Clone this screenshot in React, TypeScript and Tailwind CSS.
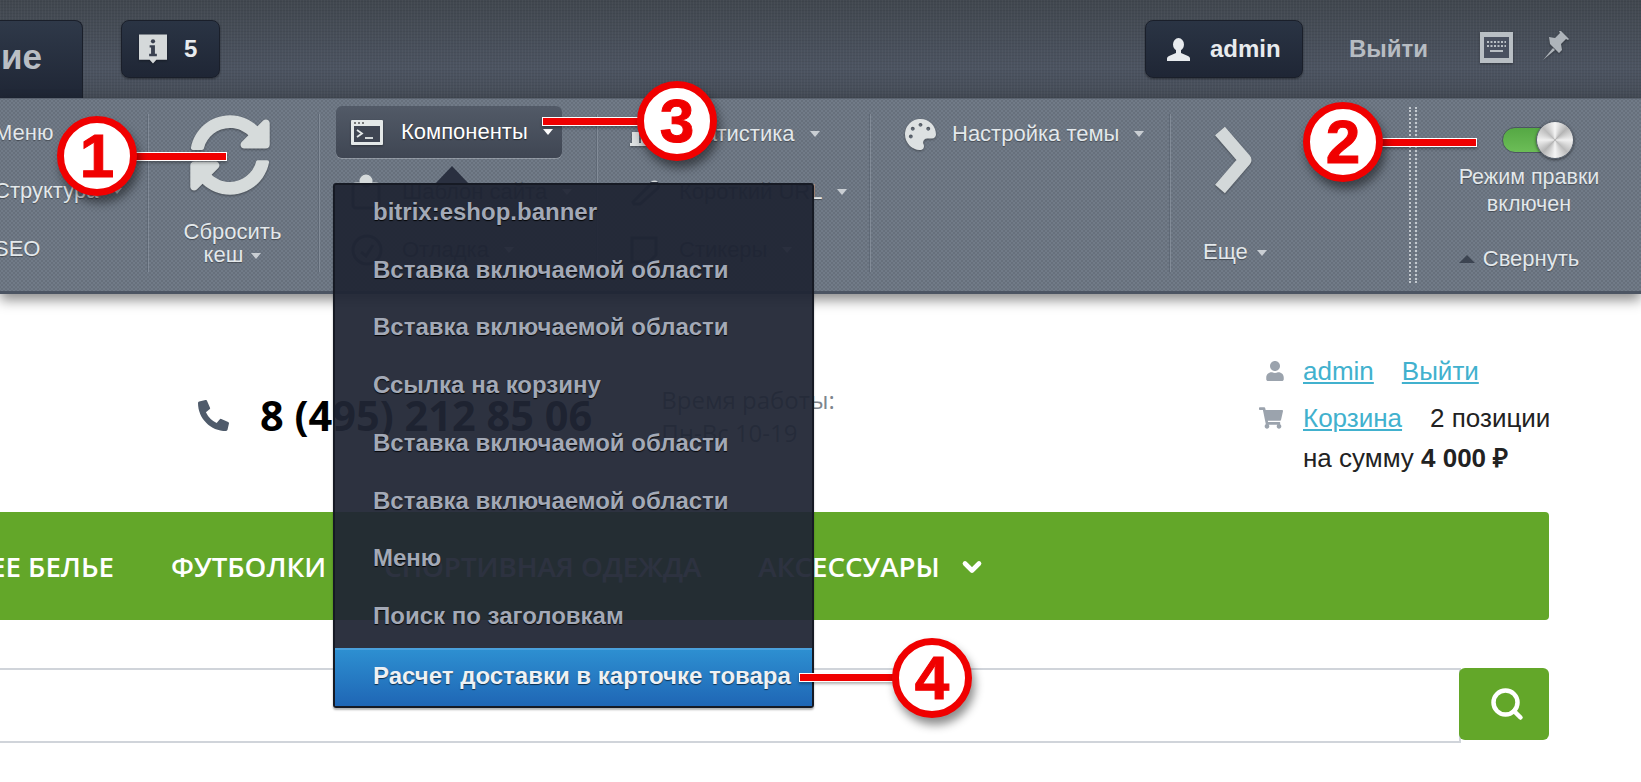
import React from 'react';
import { ChevronDown, Search } from 'lucide-react';
import { FaPalette, FaPhoneAlt, FaShoppingCart, FaSyncAlt, FaUser } from 'react-icons/fa';

const iconShadow = 'drop-shadow-[0_1px_1px_rgba(0,0,0,0.35)]';
const panelText = 'text-[#e3e8eb] text-[22px] leading-none [text-shadow:0_1px_1px_rgba(0,0,0,0.35)]';
// items lying under the dropdown read darker than the panel
const hiddenText = 'text-[#2f3542] text-[22px] leading-none';

const menuItems = [
  'bitrix:eshop.banner',
  'Вставка включаемой области',
  'Вставка включаемой области',
  'Ссылка на корзину',
  'Вставка включаемой области',
  'Вставка включаемой области',
  'Меню',
  'Поиск по заголовкам',
];

function Caret({ className = '' }: { className?: string }) {
  return <span className={`inline-block w-0 h-0 border-x-[5px] border-x-transparent border-t-[6px] border-t-[#c9ced3] ${className}`} />;
}

function Sep() {
  return <div className="w-[2px] h-[158px] mt-[15px] shrink-0 bg-[#5f6976] border-r border-[#828b97]" />;
}

function ToolRow({ icon, label, gap = 'w-[66px]', dim = false }: { icon?: React.ReactNode; label: React.ReactNode; gap?: string; dim?: boolean }) {
  return (
    <div className="h-[58px] flex items-center">
      <div className={`${gap} shrink-0 flex items-center`}>{icon}</div>
      <span className={dim ? hiddenText : panelText}>{label}</span>
      <Caret className={dim ? 'ml-[15px] border-t-[#2f3542]' : 'ml-[15px]'} />
    </div>
  );
}

function Callout({ n, x, y, lineFrom, lineTo, lineY }: { n: number; x: number; y: number; lineFrom: number; lineTo: number; lineY: number }) {
  return (
    <>
      <div
        className="absolute h-[9px] bg-[#f00000] border border-white z-30 shadow-[0_2px_3px_rgba(0,0,0,0.3)]"
        style={{ left: lineFrom, top: lineY, width: lineTo - lineFrom }}
      />
      <div
        className="absolute w-[80px] h-[80px] rounded-full bg-white border-[7px] border-[#f00000] z-30 flex items-center justify-center shadow-[3px_7px_10px_rgba(0,0,0,0.45)] text-[#f00000] font-bold text-[62px] leading-none [-webkit-text-stroke:1px_#f00000]"
        style={{ left: x, top: y }}
      >
        {n}
      </div>
    </>
  );
}

function ConsoleIcon() {
  return (
    <svg width="32" height="25" viewBox="0 0 32 25" className={iconShadow}>
      <rect width="32" height="25" rx="1" fill="#e4e8e8" />
      <rect x="3" y="6" width="26" height="16" fill="#3f4552" />
      <circle cx="4" cy="3" r="1" fill="#555" /><circle cx="8" cy="3" r="1" fill="#555" /><circle cx="12" cy="3" r="1" fill="#555" />
      <path d="M6 10l5 3.500-5 3.500" fill="none" stroke="#e4e8e8" strokeWidth="1.800" />
      <path d="M14 18h8" stroke="#e4e8e8" strokeWidth="1.800" />
    </svg>
  );
}

function InfoIcon() {
  return (
    <svg width="28" height="31" viewBox="0 0 29 31" className={iconShadow}>
      <path d="M0 0h29v26H18l-3.500 4-3.500-4H0z" fill="#d5d9da" />
      <circle cx="14.500" cy="7" r="2.200" fill="#3a4150" />
      <path d="M11 11h5.500v9H18.500v2.500h-8V20h2v-6.500H11z" fill="#3a4150" />
    </svg>
  );
}

function BustIcon() {
  return (
    <svg width="23" height="23" viewBox="0 0 23 23" fill="#e8ebee">
      <ellipse cx="11.500" cy="6.500" rx="5.500" ry="6.500" />
      <path d="M9 12h5v3l7 3c1 .5 2 1.500 2 2.500V23H0v-2.500c0-1 1-2 2-2.500l7-3z" />
    </svg>
  );
}

function KeyboardIcon() {
  return (
    <svg width="33" height="31" viewBox="0 0 33 31" className={iconShadow}>
      <rect width="33" height="31" fill="#b9bfc4" />
      <rect x="4" y="5" width="25" height="21" fill="#4a5160" />
      <path d="M7 10h19M7 14h19" stroke="#b9bfc4" strokeWidth="2" strokeDasharray="2 1.500" />
      <path d="M10 19h13" stroke="#b9bfc4" strokeWidth="2" />
    </svg>
  );
}

function PinIcon() {
  return (
    <svg width="30" height="30" viewBox="0 0 30 30" fill="#aeb4ba" className={iconShadow}>
      <path d="M1 29l10-12 2 2z" />
      <path d="M8 13l9 9 3-3-1-6 5-5 2 1 1-1-9-9-1 1 1 2-5 5-6-1z" />
    </svg>
  );
}

// light above the dropdown's top edge, dark beneath it
function ClipboardIcon() {
  return (
    <svg width="30" height="36" viewBox="0 0 30 36" fill="none" stroke="url(#clip-tone)" strokeWidth="3">
      <defs>
        <linearGradient id="clip-tone" gradientUnits="userSpaceOnUse" x1="0" y1="0" x2="0" y2="36">
          <stop offset="0.3" stopColor="#d5dadb" />
          <stop offset="0.3" stopColor="#2f3542" />
        </linearGradient>
      </defs>
      <rect x="2" y="10" width="26" height="24" rx="3" />
      <circle cx="15" cy="7" r="5" fill="url(#clip-tone)" />
    </svg>
  );
}

function GaugeIcon() {
  return (
    <svg width="32" height="32" viewBox="0 0 32 32" fill="none" stroke="#2f3542" strokeWidth="3">
      <circle cx="16" cy="16" r="14" />
      <path d="M10 18l5 4 7-11" />
    </svg>
  );
}

function ChartIcon() {
  return (
    <svg width="30" height="24" viewBox="0 0 30 24" fill="#dde1e2" className={iconShadow}>
      <rect x="2" y="10" width="7" height="11" /><rect x="11" y="4" width="7" height="17" /><rect x="20" y="0" width="7" height="21" />
      <rect x="0" y="21" width="30" height="3" />
    </svg>
  );
}

function ClipIcon() {
  return (
    <svg width="30" height="28" viewBox="0 0 30 28" fill="none" stroke="url(#url-tone)" strokeWidth="3">
      <defs>
        <linearGradient id="url-tone" gradientUnits="userSpaceOnUse" x1="0" y1="0" x2="0" y2="28">
          <stop offset="0.16" stopColor="#d5dadb" />
          <stop offset="0.16" stopColor="#2f3542" />
        </linearGradient>
      </defs>
      <path d="M3 24L22 5a4 4 0 016 5L10 26l-6 0z" />
    </svg>
  );
}

function StickerIcon() {
  return (
    <svg width="28" height="28" viewBox="0 0 28 28" fill="none" stroke="#2f3542" strokeWidth="3">
      <path d="M2 2h24v17l-7 7H2z" />
    </svg>
  );
}

function TopBar() {
  return (
    <div className="h-[98px] flex bg-[#4a515d] bg-[repeating-linear-gradient(90deg,rgba(255,255,255,0.03)_0_1px,transparent_1px_3px),repeating-linear-gradient(0deg,rgba(0,0,0,0.06)_0_1px,transparent_1px_3px),linear-gradient(#41474f,#4c5461_70%,#454c57)]">
      <div className="w-[83px] h-[78px] mt-[20px] shrink-0 overflow-hidden rounded-tr-lg bg-[linear-gradient(#2f3949,#1f2635)] border-r border-t border-[#1a1f2a] flex justify-end items-start pt-[18px] pr-[40px]">
        <span className="text-[#b9bec4] font-bold text-[35px] leading-none whitespace-nowrap">ние</span>
      </div>
      <div className="ml-[38px] mt-[20px] w-[99px] h-[58px] rounded-lg bg-[linear-gradient(#2a3444,#1f2635)] border border-[#1a1f2a] flex items-center pl-[17px] shadow-[0_1px_2px_rgba(0,0,0,0.4)]">
        <InfoIcon />
        <span className="ml-[17px] text-[#e8ebee] font-bold text-[24px] leading-none">5</span>
      </div>
      <div className="ml-auto mt-[20px] w-[158px] h-[58px] rounded-lg bg-[linear-gradient(#2a3444,#1f2635)] border border-[#1a1f2a] flex items-center pl-[21px] shadow-[0_1px_2px_rgba(0,0,0,0.4)]">
        <BustIcon />
        <span className="ml-[20px] text-[#e8ebee] font-bold text-[24px] leading-none">admin</span>
      </div>
      <span className="ml-[46px] mt-[37px] text-[#b7bcc2] font-bold text-[24px] leading-none">Выйти</span>
      <div className="ml-[52px] mt-[32px]"><KeyboardIcon /></div>
      <div className="ml-[29px] mt-[31px]"><PinIcon /></div>
      <div className="w-[69px]" />
    </div>
  );
}

function Panel() {
  return (
    <div className="relative z-10 h-[196px] flex bg-[#717b88] bg-[radial-gradient(circle,rgba(0,0,0,0.09)_1px,transparent_1.500px),radial-gradient(circle,rgba(0,0,0,0.09)_1px,transparent_1.500px)] bg-size-[4px_4px] [background-position:0_0,2px_2px] border-b-[3px] border-b-[#4c5563] border-t border-t-[#5a626e] shadow-[0_6px_12px_rgba(0,0,0,0.45)] overflow-visible">
      <div className="w-[147px] shrink-0 pt-[5px] overflow-hidden">
        <div className="h-[58px] flex items-center -ml-[6px]"><span className={panelText}>Меню</span></div>
        <div className="h-[58px] flex items-center -ml-[6px]"><span className={panelText}>Структура</span><Caret className="ml-[14px]" /></div>
        <div className="h-[58px] flex items-center -ml-[6px]"><span className={panelText}>SEO</span></div>
      </div>
      <Sep />
      <div className="w-[169px] shrink-0 flex flex-col items-center pt-[15px] pr-[2px]">
        <FaSyncAlt size={82} className={`text-[#d6dbdb] -ml-[6px] ${iconShadow}`} />
        <span className={`${panelText} mt-[25px]`}>Сбросить</span>
        <span className={`${panelText} mt-[1px]`}>кеш<Caret className="ml-[8px] align-middle" /></span>
      </div>
      <Sep />
      <div className="w-[276px] shrink-0 pl-[16px] pt-[6px]">
        <div className="h-[58px] flex items-start pt-[1px]">
          <div className="w-[226px] h-[52px] rounded-md bg-[linear-gradient(#525a67,#3f4653)] shadow-[0_1px_0_rgba(255,255,255,0.25)] flex items-center pl-[15px]">
            <ConsoleIcon />
            <span className="ml-[18px] text-white text-[22px] leading-none [text-shadow:0_1px_1px_rgba(0,0,0,0.5)]">Компоненты</span>
            <Caret className="ml-[15px] border-t-white" />
          </div>
        </div>
        <ToolRow icon={<div className="pl-[15px]"><ClipboardIcon /></div>} label="Шаблон сайта" dim />
        <ToolRow icon={<div className="pl-[15px]"><GaugeIcon /></div>} label="Отладка" dim />
      </div>
      <Sep />
      <div className="w-[271px] shrink-0 pl-[32px] pt-[6px]">
        <ToolRow icon={<ChartIcon />} label="Статистика" gap="w-[49px]" />
        <div className="h-[58px] flex items-center">
          <div className="w-[49px] shrink-0 flex items-center"><ClipIcon /></div>
          <span className={hiddenText}>Короткий UR</span>
          <span className={panelText}>L</span>
          <Caret className="ml-[15px]" />
        </div>
        <ToolRow icon={<StickerIcon />} label="Стикеры" gap="w-[49px]" dim />
      </div>
      <Sep />
      <div className="w-[298px] shrink-0 pl-[34px] pt-[6px]">
        <ToolRow icon={<FaPalette size={31} className={`text-[#dde1e2] ${iconShadow}`} />} label="Настройка темы" gap="w-[47px]" />
      </div>
      <Sep />
      <div className="w-[238px] shrink-0 pl-[37px] flex flex-col">
        <svg width="50" height="72" viewBox="0 0 50 72" className={`mt-[25px] ${iconShadow}`}>
          <path d="M12 7l25 29-25 29" fill="none" stroke="#d3d8d9" strokeWidth="13" strokeLinejoin="round" />
        </svg>
        <span className={`${panelText} mt-[45px] -ml-[5px]`}>Еще<Caret className="ml-[9px] align-middle" /></span>
      </div>
      <div className="w-[8px] h-[176px] mt-[8px] shrink-0 border-x-2 border-dotted border-[#c3c9cf]" />
      <div className="flex-1 flex flex-col items-center pt-[21px]">
        <div className="relative w-[72px] h-[26px] mt-[7px] ml-[18px] rounded-full bg-[linear-gradient(#55a844,#6cbd57)] border border-[#4c5563]">
          <div className="absolute -right-[1px] -top-[7px] w-[38px] h-[38px] rounded-full border border-[#59626e] shadow-[0_1px_3px_rgba(0,0,0,0.5)] bg-[conic-gradient(#f5f5f5,#b5b5b5,#f0f0f0,#bcbcbc,#f5f5f5,#b5b5b5,#f0f0f0,#bcbcbc,#f5f5f5)]" />
        </div>
        <span className="text-[#e3e8eb] text-[21.500px] [text-shadow:0_1px_1px_rgba(0,0,0,0.35)] mt-[11px] text-center leading-[27px]">Режим правки<br />включен</span>
        <div className="mt-[30px] mr-[20px] flex items-center">
          <span className="w-0 h-0 border-x-[8px] border-x-transparent border-b-[8px] border-b-[#3c4451]" />
          <span className={`${panelText} ml-[8px]`}>Свернуть</span>
        </div>
      </div>
    </div>
  );
}

function Header() {
  return (
    <div className="h-[218px] flex items-start pr-[92px]">
      <FaPhoneAlt size={31} className="ml-[198px] mt-[106px] shrink-0 text-[#4f5b6b]" />
      <span className="ml-[31px] mt-[94px] font-['Open_Sans',sans-serif] font-bold text-[41.500px] leading-[54px] text-black whitespace-nowrap">8 (495) 212 85 06</span>
      <div className="ml-[69px] mt-[89px] font-['Open_Sans',sans-serif] text-[24px] leading-[33px] text-[#7d858d] whitespace-nowrap">
        <div>Время работы:</div>
        <div>Пн-Вс 10-19</div>
      </div>
      <div className="ml-auto mt-[57px] w-[290px] shrink-0 text-[26px] leading-[40px] text-[#222] whitespace-nowrap">
        <div className="flex items-center mb-[7px]">
          <FaUser size={20} className="ml-[4px] w-[24px] text-[#9ba3ad] shrink-0" />
          <a className="ml-[16px] text-[#41b1ce] underline">admin</a>
          <a className="ml-[28px] text-[#41b1ce] underline">Выйти</a>
        </div>
        <div className="flex items-center">
          <FaShoppingCart size={24} className="text-[#9ba3ad] shrink-0" />
          <a className="ml-[20px] text-[#41b1ce] underline">Корзина</a>
          <span className="ml-[28px]">2 позиции</span>
        </div>
        <div className="ml-[44px]">на сумму <b>4 000 ₽</b></div>
      </div>
    </div>
  );
}

function Nav() {
  return (
    <div className="h-[108px] mr-[92px] pt-[2px] rounded-r bg-[#63a729] flex items-center font-['Open_Sans',sans-serif] font-semibold text-[27.700px] text-white whitespace-nowrap overflow-hidden">
      <span className="-ml-[10px]">ЕЕ БЕЛЬЕ</span>
      <span className="ml-[57px]">ФУТБОЛКИ</span>
      <span className="ml-[58px]">СПОРТИВНАЯ ОДЕЖДА</span>
      <span className="ml-[57px]">АКСЕССУАРЫ</span>
      <ChevronDown size={28} strokeWidth={4} className="ml-[18px]" />
    </div>
  );
}

function SearchRow() {
  return (
    <div className="mt-[48px] mr-[92px] flex items-start">
      <div className="flex-1 h-[75px] border-y-2 border-r-2 border-[#d0d4da]" />
      <div className="-ml-[2px] w-[90px] h-[72px] rounded-md bg-[#63a729] flex items-center justify-center pl-[6px]">
        <Search size={36} strokeWidth={3} className="text-white" />
      </div>
    </div>
  );
}

function ComponentsMenu() {
  return (
    <>
      <div className="absolute left-[435px] top-[166px] w-0 h-0 border-x-[17px] border-x-transparent border-b-[18px] border-b-[#2a3040] z-20" />
      <div className="absolute left-[333px] top-[183px] w-[481px] h-[525px] z-20 rounded-[3px] border-2 border-[#161a24] bg-[#202534]/94 shadow-[0_2px_2px_rgba(0,0,0,0.3)] font-bold text-[24px] leading-none text-[#a3a9b6] [text-shadow:0_1px_1px_rgba(0,0,0,0.9)] flex flex-col">
        <div className="-mt-[2px]">
          {menuItems.map((item, i) => (
            <div key={i} className="h-[57.750px] flex items-center pl-[38px]">{item}</div>
          ))}
        </div>
        <div className="mt-auto h-[58px] flex items-center pb-[4px] pl-[38px] text-[#eef1f4] border-t-2 border-[#4aa0dc] bg-[linear-gradient(#2d8fd1,#1f66b5)] [text-shadow:0_1px_1px_rgba(0,0,0,0.6)]">
          Расчет доставки в карточке товара
        </div>
      </div>
    </>
  );
}

export default function App() {
  return (
    <div className="relative w-[1641px] h-[782px] overflow-hidden bg-white font-['Liberation_Sans',sans-serif]">
      <TopBar />
      <Panel />
      <Header />
      <Nav />
      <SearchRow />
      <ComponentsMenu />
      <Callout n={1} x={57} y={116} lineFrom={135} lineTo={227} lineY={152} />
      <Callout n={2} x={1303} y={102} lineFrom={1381} lineTo={1477} lineY={138} />
      <Callout n={3} x={637} y={81} lineFrom={542} lineTo={639} lineY={117} />
      <Callout n={4} x={892} y={638} lineFrom={799} lineTo={894} lineY={673} />
    </div>
  );
}
